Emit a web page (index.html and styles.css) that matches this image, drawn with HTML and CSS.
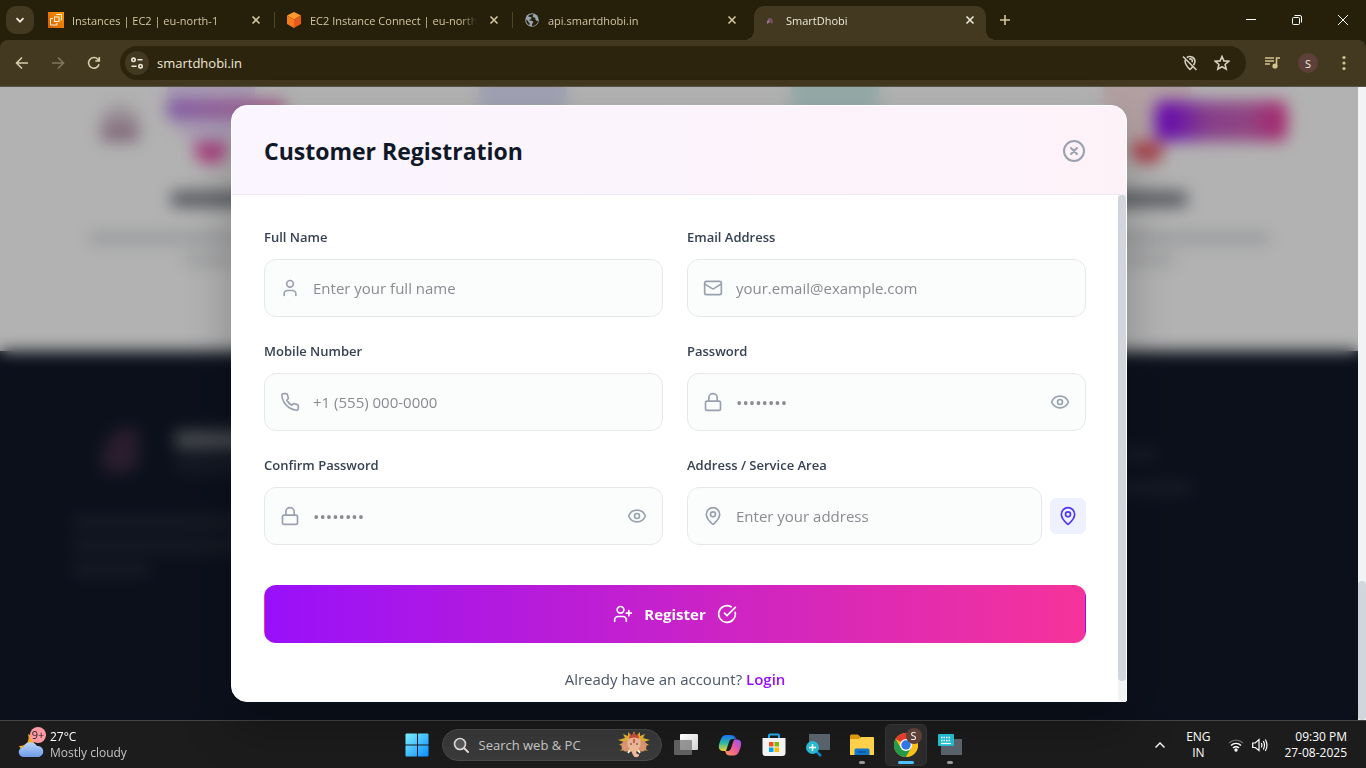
FILE: index.html
```html
<!DOCTYPE html>
<html lang="en">
<head>
<meta charset="utf-8">
<title>SmartDhobi</title>
<link rel="stylesheet" href="styles.css">
</head>
<body>
<div class="tabstrip">
  <button class="tab-search" aria-label="Search tabs"><svg viewBox="0 0 12 12" width="12" height="12"><path d="M2.500 4.200L6 7.700l3.500-3.500" fill="none" stroke="currentColor" stroke-width="1.800"/></svg></button>
  <div class="tabs">
    <div class="tab">
      <svg class="favicon" viewBox="0 0 16 16"><defs><linearGradient id="ec" x1="0" y1="1" x2="1" y2="0"><stop stop-color="#d45b07"/><stop offset="1" stop-color="#ff9900"/></linearGradient></defs><path fill="url(#ec)" d="M0 0h16v16H0z"/><g fill="none" stroke="#fff3df"><rect x="6.500" y="5" width="4.500" height="4.500"/><path d="M5 6.500H2.500v6.500h6.500v-2M8.500 3V2.500h5V8h-1"/></g></svg>
      <span class="tab-title">Instances | EC2 | eu-north-1</span><button class="tab-close" aria-label="Close tab"><svg viewBox="0 0 10 10"><path d="M1.500 1.500l7 7m0-7l-7 7"/></svg></button>
    </div>
    <div class="tab">
      <svg class="favicon" viewBox="0 0 16 16"><path fill="#ff9a2a" d="M8 0l7 3.600L8 7.500 1 3.600z"/><path fill="#f47b20" d="M1 3.600l7 3.900V16l-7-4z"/><path fill="#e8591c" d="M15 3.600L8 7.500V16l7-4z"/></svg>
      <span class="tab-title">EC2 Instance Connect | eu-north</span><button class="tab-close" aria-label="Close tab"><svg viewBox="0 0 10 10"><path d="M1.500 1.500l7 7m0-7l-7 7"/></svg></button>
    </div>
    <div class="tab">
      <svg class="favicon" viewBox="0 0 16 16"><circle cx="8" cy="8" r="6.800" fill="#9aa5b1"/><path fill="#261f0a" d="M9.500 2.500C7 2 5 3 4.200 4.500l3 .8c1 .5.3 1.600-.6 1.700L5 8.500c2 .1 4 .2 4.200 1.700.1 1-1.200 1-1.200 2.200v1.600c3 0 5.800-2.200 6-5-.9.2-1.800-.2-2.300-1C11 7 12 5.500 10.300 5.400 8.800 5.300 8 4.200 9.500 2.500zM2.200 7.300c-.4 2.400.9 5 3.300 6l.2-2.300c-1.500-.6-1.200-1.800-3.500-3.700z"/></svg>
      <span class="tab-title">api.smartdhobi.in</span><button class="tab-close" aria-label="Close tab"><svg viewBox="0 0 10 10"><path d="M1.500 1.500l7 7m0-7l-7 7"/></svg></button>
    </div>
    <div class="tab tab-active">
      <svg class="favicon" viewBox="0 0 16 16"><path d="M5.500 7.500c1-2 4-2 4.800 0 .7 1.200.5 2.500.2 4H9c-.4-1.300 0-2-1-2.200" fill="#745267"/><path d="M5 9l2-1 1 2-3 2z" fill="#a77593"/></svg>
      <span class="tab-title">SmartDhobi</span><button class="tab-close" aria-label="Close tab"><svg viewBox="0 0 10 10"><path d="M1.500 1.500l7 7m0-7l-7 7"/></svg></button>
    </div>
  </div>
  <button class="new-tab" aria-label="New tab"><svg viewBox="0 0 12 12" width="12" height="12"><path d="M6 1v10M1 6h10" stroke="currentColor" stroke-width="1.600"/></svg></button>
  <div class="window-controls">
    <button aria-label="Minimize"><svg viewBox="0 0 12 12"><path d="M1 5.500h10"/></svg></button>
    <button aria-label="Restore"><svg viewBox="0 0 12 12"><rect x="1.500" y="3.500" width="7" height="7" rx="1"/><path d="M3.500 1.500H9a1.500 1.500 0 0 1 1.500 1.500v5.500"/></svg></button>
    <button aria-label="Close"><svg viewBox="0 0 12 12"><path d="M1 1l10 10M11 1L1 11"/></svg></button>
  </div>
</div>

<div class="toolbar">
  <button class="tool" aria-label="Back"><svg viewBox="0 0 16 16"><path d="M14 8H3M8 2.500L2.500 8 8 13.500"/></svg></button>
  <button class="tool tool-dim" aria-label="Forward"><svg viewBox="0 0 16 16"><path d="M2 8h11M8 2.500L13.500 8 8 13.500"/></svg></button>
  <button class="tool" aria-label="Reload"><svg viewBox="0 0 16 16"><path d="M13 9.200A5.300 5.300 0 1 1 11.800 4.300L13 5.500M13.300 2v4H9.300"/></svg></button>
  <div class="omnibox">
    <button class="site-info" aria-label="View site information"><svg viewBox="0 0 16 16"><circle cx="4.500" cy="4.800" r="1.700"/><path d="M8.500 4.800h5M2.500 11.200h5"/><circle cx="11.500" cy="11.200" r="1.700"/></svg></button>
    <input class="address" aria-label="Address" value="smartdhobi.in">
    <button class="tool" aria-label="Location blocked"><svg viewBox="0 0 16 16"><path d="M4.800 2.700A5 5 0 0 1 13 6.200c0 1.300-.6 2.600-1.500 4M3.200 5c-.8 3.500 2 6.800 4.800 9.500.9-.8 1.700-1.600 2.400-2.500M7.200 4.400A1.800 1.800 0 1 1 9.700 7M1 1.500l13.500 13.500"/></svg></button>
    <button class="tool" aria-label="Bookmark this page"><svg viewBox="0 0 16 16"><path d="M8 1.500l1.900 4.400 4.800.4-3.600 3.200 1.100 4.700L8 11.700l-4.200 2.500 1.100-4.700L1.300 6.300l4.800-.4z"/></svg></button>
  </div>
  <button class="tool tool-gold" aria-label="Media controls"><svg viewBox="0 0 16 16"><path d="M1 3h9M1 6h9M1 9h5M12.500 11V3H16"/><circle cx="11" cy="11" r="1.800" fill="currentColor"/></svg></button>
  <button class="avatar" aria-label="Profile">S</button>
  <button class="tool tool-gold" aria-label="Menu"><svg viewBox="0 0 16 16"><g fill="currentColor" stroke="none"><circle cx="8" cy="2.500" r="1.600"/><circle cx="8" cy="8" r="1.600"/><circle cx="8" cy="13.500" r="1.600"/></g></svg></button>
</div>

<main class="viewport">
  <div class="site" aria-hidden="true">
    <section class="steps">
      <div class="step step-purple"><i class="step-icon"></i><i class="step-badge"></i><i class="bar bar-title"></i><i class="bar bar-wide"></i><i class="bar bar-short"></i></div>
      <div class="step step-blue"><i class="step-icon"></i><i class="step-badge"></i><i class="bar bar-title"></i><i class="bar bar-wide"></i><i class="bar bar-short"></i></div>
      <div class="step step-teal"><i class="step-icon"></i><i class="step-badge"></i><i class="bar bar-title"></i><i class="bar bar-wide"></i><i class="bar bar-short"></i></div>
      <div class="step step-red"><i class="step-icon"></i><i class="step-badge"></i><i class="bar bar-title"></i><i class="bar bar-wide"></i><i class="bar bar-short"></i></div>
    </section>
    <footer class="site-footer">
      <div class="footer-brand"><i class="footer-logo"></i><div><i class="bar foot-name"></i><i class="bar foot-tag"></i></div></div>
      <div class="foot-links"><i class="bar"></i><i class="bar foot-long"></i></div>
      <div class="foot-copy"><i class="bar"></i><i class="bar"></i><i class="bar foot-end"></i></div>
    </footer>
    <header class="site-header"><i class="brand-logo"></i><i class="brand-name"></i><i class="header-cta"></i></header>
  </div>

  <div class="overlay">
    <section class="modal" role="dialog" aria-labelledby="dialog-title">
      <header class="modal-header">
        <h2 id="dialog-title">Customer Registration</h2>
        <button class="modal-close" aria-label="Close"><svg class="icon icon-lg" viewBox="0 0 24 24"><circle cx="12" cy="12" r="10"/><path d="M15 9l-6 6M9 9l6 6"/></svg></button>
      </header>
      <div class="modal-body">
        <form class="form">
          <div class="fields">
            <div class="field">
              <label for="name">Full Name</label>
              <div class="control"><svg class="icon" viewBox="0 0 24 24"><path d="M19 21v-2a4 4 0 0 0-4-4H9a4 4 0 0 0-4 4v2"/><circle cx="12" cy="7" r="4"/></svg><input id="name" type="text" placeholder="Enter your full name"></div>
            </div>
            <div class="field">
              <label for="email">Email Address</label>
              <div class="control"><svg class="icon" viewBox="0 0 24 24"><rect x="2" y="4" width="20" height="16" rx="2"/><path d="M22 7l-8.970 5.700a1.940 1.940 0 0 1-2.060 0L2 7"/></svg><input id="email" type="email" placeholder="your.email@example.com"></div>
            </div>
            <div class="field">
              <label for="mobile">Mobile Number</label>
              <div class="control"><svg class="icon" viewBox="0 0 24 24"><path d="M22 16.920v3a2 2 0 0 1-2.180 2 19.790 19.790 0 0 1-8.630-3.070 19.500 19.500 0 0 1-6-6 19.790 19.790 0 0 1-3.070-8.670A2 2 0 0 1 4.110 2h3a2 2 0 0 1 2 1.720 12.840 12.840 0 0 0 .7 2.810 2 2 0 0 1-.45 2.110L8.090 9.910a16 16 0 0 0 6 6l1.270-1.270a2 2 0 0 1 2.110-.45 12.840 12.840 0 0 0 2.810.7A2 2 0 0 1 22 16.920z"/></svg><input id="mobile" type="tel" placeholder="+1 (555) 000-0000"></div>
            </div>
            <div class="field">
              <label for="password">Password</label>
              <div class="control"><svg class="icon" viewBox="0 0 24 24"><rect x="3" y="11" width="18" height="11" rx="2"/><path d="M7 11V7a5 5 0 0 1 10 0v4"/></svg><input id="password" type="password" placeholder="••••••••"><button type="button" class="reveal" aria-label="Show password"><svg class="icon" viewBox="0 0 24 24"><path d="M2.062 12.348a1 1 0 0 1 0-.696 10.750 10.750 0 0 1 19.876 0 1 1 0 0 1 0 .696 10.750 10.750 0 0 1-19.876 0"/><circle cx="12" cy="12" r="3"/></svg></button></div>
            </div>
            <div class="field">
              <label for="confirm">Confirm Password</label>
              <div class="control"><svg class="icon" viewBox="0 0 24 24"><rect x="3" y="11" width="18" height="11" rx="2"/><path d="M7 11V7a5 5 0 0 1 10 0v4"/></svg><input id="confirm" type="password" placeholder="••••••••"><button type="button" class="reveal" aria-label="Show password"><svg class="icon" viewBox="0 0 24 24"><path d="M2.062 12.348a1 1 0 0 1 0-.696 10.750 10.750 0 0 1 19.876 0 1 1 0 0 1 0 .696 10.750 10.750 0 0 1-19.876 0"/><circle cx="12" cy="12" r="3"/></svg></button></div>
            </div>
            <div class="field">
              <label for="address">Address / Service Area</label>
              <div class="address-row">
                <div class="control"><svg class="icon" viewBox="0 0 24 24"><path d="M20 10c0 4.993-5.539 10.193-7.399 11.799a1 1 0 0 1-1.202 0C9.539 20.193 4 14.993 4 10a8 8 0 0 1 16 0"/><circle cx="12" cy="10" r="3"/></svg><input id="address" type="text" placeholder="Enter your address"></div>
                <button type="button" class="locate" aria-label="Use current location"><svg class="icon" viewBox="0 0 24 24"><path d="M20 10c0 4.993-5.539 10.193-7.399 11.799a1 1 0 0 1-1.202 0C9.539 20.193 4 14.993 4 10a8 8 0 0 1 16 0"/><circle cx="12" cy="10" r="3"/></svg></button>
              </div>
            </div>
          </div>
          <button type="submit" class="submit"><svg class="icon" viewBox="0 0 24 24"><path d="M16 21v-2a4 4 0 0 0-4-4H6a4 4 0 0 0-4 4v2M19 8v6M22 11h-6"/><circle cx="9" cy="7" r="4"/></svg>Register<svg class="icon" viewBox="0 0 24 24"><path d="M21.801 10A10 10 0 1 1 17 3.335M9 11l3 3L22 4"/></svg></button>
          <p class="login-line">Already have an account? <a href="#login">Login</a></p>
        </form>
        <div class="modal-scroll"><div class="modal-thumb"></div></div>
      </div>
    </section>
  </div>
  <div class="page-scroll"><div class="page-thumb"></div></div>
</main>

<div class="taskbar">
  <div class="weather">
    <svg viewBox="0 0 28 32" width="28" height="32"><defs><linearGradient id="cl" x1="0" y1="0" x2="0" y2="1"><stop stop-color="#b9d7fb"/><stop offset="1" stop-color="#6f9be8"/></linearGradient></defs><path d="M10 5c2 7-1 12-9 12 2 5 9 6 13 1s2-11-4-13z" fill="#f9a825"/><path d="M6 28a5 5 0 0 1-.5-10 7.500 7.500 0 0 1 13.500-1 5.600 5.600 0 0 1 2 11z" fill="url(#cl)"/></svg>
    <span class="weather-badge">9+</span>
    <div class="weather-text"><span>27°C</span><span class="muted">Mostly cloudy</span></div>
  </div>
  <div class="apps">
    <button class="app" aria-label="Start"><svg viewBox="0 0 24 24"><defs><linearGradient id="wn" x1="0" y1="0" x2="1" y2="1"><stop stop-color="#7df0ff"/><stop offset="1" stop-color="#0a8dff"/></linearGradient></defs><path fill="url(#wn)" d="M1.500.5H12v11H.5V1.500a1 1 0 0 1 1-1zM13 .5h9.500a1 1 0 0 1 1 1v10H13zM.5 12.500H12v11H1.500a1 1 0 0 1-1-1zM13 12.500h10.500v10a1 1 0 0 1-1 1H13z"/></svg></button>
    <label class="search"><svg viewBox="0 0 16 16"><circle cx="7" cy="7" r="5.500" fill="#5b5b5b" stroke="#e8e8e8" stroke-width="1.600"/><path d="M11 11l4 4" stroke="#e8e8e8" stroke-width="1.800" stroke-linecap="round"/></svg><input aria-label="Search" placeholder="Search web &amp; PC">
      <svg class="festive" viewBox="0 0 32 28"><path fill="#efbb35" d="M16 0l2 5 4-4v4l5-2-2 4 7 2-6 2 5 3-6 1 5 5-7-2-1 4-4-2-2 5-2-5-4 2-1-4-7 2 5-5-6-1 5-3-6-2 7-2-2-4 5 2V1l4 4z"/><path fill="#d8493f" d="M11 8l1-5 2 2 2-4 2 4 2-2 1 5z"/><ellipse cx="8" cy="15" rx="4.500" ry="5.500" fill="#e79b77"/><ellipse cx="24" cy="15" rx="4.500" ry="5.500" fill="#e79b77"/><path fill="#f6c0a0" d="M10 8q6-3 12 0 2 6-2 10l-2 3q1 3 3 2v2q-4 3-6-1-1-3-3-6-4-4-2-10z"/><path d="M12 19l-2 3M20 19l2 3" stroke="#fff" stroke-width="1.500"/><circle cx="13" cy="13" r=".8" fill="#5c2c24"/><circle cx="19" cy="13" r=".8" fill="#5c2c24"/><path d="M16 8v4" stroke="#d8312c" stroke-width="1.300"/></svg></label>
    <button class="app" aria-label="Task view"><svg viewBox="0 0 24 24"><defs><linearGradient id="tv" x1="0" y1="0" x2="1" y2="1"><stop stop-color="#fff"/><stop offset="1" stop-color="#d2d2d2"/></linearGradient></defs><rect x="6" y="1" width="18" height="16" rx="1" fill="url(#tv)"/><rect x="0" y="7" width="18" height="15" rx="1" fill="#777" fill-opacity=".75"/></svg></button>
    <button class="app" aria-label="Copilot"><svg viewBox="0 0 24 24"><defs><linearGradient id="ca" x1="0" y1="0" x2="0" y2="1"><stop stop-color="#1f6ff0"/><stop offset=".5" stop-color="#2bb8a5"/><stop offset="1" stop-color="#f4d32c"/></linearGradient><linearGradient id="cb" x1="1" y1="0" x2="0" y2="1"><stop stop-color="#9250f0"/><stop offset=".5" stop-color="#ee5a9b"/><stop offset="1" stop-color="#ff9a4c"/></linearGradient></defs><path fill="url(#ca)" d="M17 6c-1-3-2-4-5-4H8C4 2 3 6 1.500 10 0 14 1 18 5 18h3l3-9c.8-2.500 2-3 4-3z"/><path fill="url(#cb)" d="M7 18c1 3 2 4.500 5 4.500h4c4 0 5-4 6.500-8C24 10 23 6.500 19 6.500h-3l-3 9c-.8 2-2 2.500-4 2.500z"/><path fill="#2354d8" d="M12 2c3 0 4 1 5 4.500h2L17 3.500Q16 2 14 2z"/></svg></button>
    <button class="app" aria-label="Microsoft Store"><svg viewBox="0 0 24 24"><path d="M7 6V2.500a1 1 0 0 1 1-1h8a1 1 0 0 1 1 1V6" fill="none" stroke="#20a5e8" stroke-width="2"/><path fill="#f3f3f3" d="M.5 5h23v15a3 3 0 0 1-3 3h-17a3 3 0 0 1-3-3z"/><path fill="#f25022" d="M7 9h4.500v4.500H7z"/><path fill="#7fba00" d="M12.500 9H17v4.500h-4.500z"/><path fill="#00a4ef" d="M7 14.500h4.500V19H7z"/><path fill="#ffb900" d="M12.500 14.500H17V19h-4.500z"/></svg></button>
    <button class="app" aria-label="Magnifier"><svg viewBox="0 0 24 24"><path fill="#59616b" d="M3 1h21v16H3z"/><path d="M10 18l5 5" stroke="#1685c4" stroke-width="2.500"/><circle cx="6.500" cy="14.500" r="6.500" fill="#27b9d2"/><path d="M6.500 11v7M3 14.500h7" stroke="#fff" stroke-width="1.500"/></svg></button>
    <button class="app app-open" aria-label="File Explorer"><svg viewBox="0 0 24 24"><path fill="#dc9a0c" d="M0 3a1.500 1.500 0 0 1 1.500-1.500H8L10.500 4v4H0z"/><path fill="#ffd04a" d="M0 6h9l2-2h12a1 1 0 0 1 1 1v17H0z"/><path fill="#1277ca" d="M4.500 22v-5a1.500 1.500 0 0 1 1.500-1.500h12a1.500 1.500 0 0 1 1.500 1.500v5z"/><path d="M8 19h8" stroke="#0b559b" stroke-width="1.500"/></svg></button>
    <button class="app app-open app-current" aria-label="Google Chrome"><svg viewBox="0 0 24 24"><circle cx="12" cy="12" r="12" fill="#fbc116"/><path fill="#e33b2e" d="M12 12L1.600 6a12 12 0 0 1 20.800 0z"/><path fill="#229a49" d="M12 24A12 12 0 0 1 1.600 6l5.200 9L12 18l5.200-3z"/><path fill="#fbc116" d="M22.400 6A12 12 0 0 1 12 24l5.200-9L12 6z"/><circle cx="12" cy="12" r="6" fill="#fff"/><circle cx="12" cy="12" r="4.700" fill="#3078e8"/></svg><span class="chrome-badge">S</span></button>
    <button class="app app-open" aria-label="On-screen keyboard"><svg viewBox="0 0 24 24"><path fill="#59616b" d="M3 6h21v16H3z"/><rect y="1" width="16" height="12" rx="1" fill="#22b9cd"/><path d="M3 4.500h10M3 7.500h10" stroke="#fff" stroke-width="1.500" stroke-dasharray="1.500 1"/><path d="M3 10.500h10" stroke="#fff" stroke-width="1.300"/></svg></button>
  </div>
  <div class="tray">
    <button class="tray-btn" aria-label="Hidden icons"><svg viewBox="0 0 12 12" width="12" height="12"><path d="M1.500 8.500L6 4l4.500 4.500" fill="none" stroke="#fff" stroke-width="1.400"/></svg></button>
    <div class="lang"><span>ENG</span><span>IN</span></div>
    <div class="status">
      <svg viewBox="0 0 16 16" fill="none" stroke="#fff" stroke-width="1.400"><path d="M1 6a10 10 0 0 1 14 0" stroke="#666"/><path d="M3 8.500a7 7 0 0 1 10 0M5 11a4.200 4.200 0 0 1 6 0"/><circle cx="8" cy="13" r="1" fill="#fff"/></svg>
      <svg viewBox="0 0 16 16" fill="none" stroke="#fff" stroke-width="1.200"><path d="M.7 6v4.500h2.500L7 13.500V2.500L3.200 6zM9.300 6q1.200 2 0 4.500M11.300 4q2.400 4 0 8.500M13.300 2.500q3.400 5.500 0 11.500"/></svg>
    </div>
    <div class="clock"><span>09:30 PM</span><span>27-08-2025</span></div>
  </div>
</div>
</body>
</html>
```
FILE: styles.css
```css
* { box-sizing: border-box; }
body {
  margin: 0;
  height: 100vh;
  display: flex;
  flex-direction: column;
  overflow: hidden;
  font-family: "Open Sans", "Noto Sans", sans-serif;
  background: #261f0a;
}
button { border: 0; padding: 0; background: none; color: inherit; font: inherit; display: grid; place-items: center; }
input { border: 0; padding: 0; background: none; font: inherit; outline: 0; min-width: 0; }
i { display: block; }

/* Tab strip */
.tabstrip { height: 40px; display: flex; align-items: center; color: #d3c6a0; }
.tab-search { width: 28px; height: 28px; margin: 0 3px 0 6px; border-radius: 10px; background: #423920; color: #eee8d8; }
.tabs { display: flex; align-self: stretch; padding-top: 6px; flex: 0 1 952px; min-width: 0; }
.tab { flex: 0 1 238px; min-width: 0; display: flex; align-items: center; padding: 0 11px 6px 11px; position: relative; font-size: 11px; }
.tab:nth-child(-n+2)::after { content: ""; position: absolute; right: 0; top: 6px; width: 1px; height: 16px; background: #4d442a; }
.tab-active { flex-basis: 232px; margin: 0 3px; padding: 0 8px 6px 8px; background: #423920; border-radius: 10px 10px 0 0; color: #eee8d8; }
.tab-active::before, .tab-active::after { content: ""; position: absolute; bottom: 0; width: 10px; height: 10px; }
.tab-active::before { right: 100%; background: radial-gradient(circle at 0 0, #261f0a 10px, #423920 10px); }
.tab-active::after { left: 100%; background: radial-gradient(circle at 100% 0, #261f0a 10px, #423920 10px); }
.favicon { width: 16px; height: 16px; flex: none; margin-right: 8px; }
.tab-title { flex: 1; min-width: 0; overflow: hidden; white-space: nowrap; mask-image: linear-gradient(90deg, #000 90%, transparent); }
.tab-close { width: 16px; height: 16px; margin-left: 9px; flex: none; }
.tab-close svg { width: 10px; height: 10px; stroke: currentColor; stroke-width: 1.6; }
.new-tab { width: 28px; height: 28px; margin-left: 2px; }
.window-controls { display: flex; margin-left: auto; color: #fff; }
.window-controls button { width: 46px; height: 40px; }
.window-controls svg { width: 12px; height: 12px; fill: none; stroke: #fff; }

/* Toolbar */
.toolbar { height: 47px; flex: none; display: flex; align-items: center; padding: 0 8px; gap: 8px; background: #423920; border-radius: 8px 8px 0 0; border-bottom: 1px solid #5a5445; color: #d8cdac; }
.tool { width: 28px; height: 28px; flex: none; }
.tool svg, .site-info svg { width: 16px; height: 16px; fill: none; stroke: currentColor; stroke-width: 1.6; }
.tool-dim { color: #81775c; }
.omnibox { flex: 1; height: 34px; margin: 0 4px; display: flex; align-items: center; gap: 4px; padding: 0 10px 0 5px; border-radius: 17px; background: #2d240e; color: #d6cfbf; }
.site-info { width: 24px; height: 24px; border-radius: 12px; background: #423920; color: #eee8d8; }
.address { flex: 1; margin-left: 4px; color: #eee8d8; font-size: 13px; }
.tool-gold { color: #d3c490; }
.avatar { width: 20px; height: 20px; margin: 0 4px; border-radius: 10px; background: #5d4038; color: #f4ece8; font-size: 11px; }

/* Page behind the dialog */
.viewport { flex: 1; min-height: 0; position: relative; display: grid; grid-template-columns: 1fr 8px; background: #fff; }
.site { position: relative; isolation: isolate; overflow: hidden; display: flex; flex-direction: column; background: #fff; }
.steps { height: 264px; display: grid; grid-template-columns: repeat(4, 1fr); gap: 32px; padding: 0 71px; }
.step { display: flex; flex-direction: column; align-items: center; --tone: #a855f7; }
.step-blue { --tone: #7c83ff; }
.step-teal { --tone: #2bc5ad; }
.step-red { --tone: #f8788c; }
.step-icon { width: 88px; height: 56px; border-radius: 0 0 40px 40px; background: var(--tone); }
.step-badge { width: 34px; height: 20px; margin-bottom: -4px; border-radius: 4px 4px 16px 16px; background: #f04fae; position: relative; z-index: 2; }
.step-blue .step-badge, .step-teal .step-badge { background: var(--tone); }
.step-red .step-badge { background: #ef5360; }
.bar { height: 10px; border-radius: 4px; background: #aeb2b8; }
.bar-title { width: 80px; height: 16px; margin: 32px 0 26px; background: #7c8188; }
.bar-wide { width: 244px; background: #d4d7da; }
.bar-short { width: 56px; margin-top: 12px; background: #dcdee0; }
.site-footer { flex: 1; background: #101828; padding: 76px 71px; display: grid; grid-template-columns: 1fr 230px; align-content: start; row-gap: 24px; }
.site-footer .bar { background: #252c39; }
.footer-brand { display: flex; gap: 36px; padding-left: 30px; }
.footer-logo { width: 38px; height: 46px; border-radius: 90% 20% 40% 30%; background: #3d2a43; }
.site-footer .foot-name { width: 120px; height: 18px; margin: 4px 0 12px; background: #696c74; }
.foot-tag { width: 120px; }
.foot-links { display: grid; gap: 24px; align-content: start; padding-top: 22px; }
.foot-links .bar { width: 100px; }
.foot-links .foot-long { width: 136px; }
.foot-copy { display: grid; gap: 14px; width: 280px; }
.foot-copy .foot-end { width: 80px; }
.site-header { position: absolute; inset: 0 0 auto 0; height: 68px; display: flex; align-items: center; padding: 0 71px; background: rgba(255, 255, 255, .8); }
.brand-logo { width: 38px; height: 36px; margin: 4px 0 0 30px; border-radius: 18px 18px 4px 4px; background: linear-gradient(#dccfd9 30%, #ab829e); }
.brand-name { width: 118px; height: 18px; margin: 0 auto 24px 28px; background: linear-gradient(90deg, #b47be8, #e883bd); }
.header-cta { width: 132px; height: 40px; border-radius: 8px; background: linear-gradient(90deg, #9414f5 10%, #c05bc6 40%, #cf63bb 70%, #f22f98); }
.page-scroll { background: #f1f3f5; display: flex; flex-direction: column; justify-content: flex-end; }
.page-thumb { height: 22%; border-radius: 4px; background: #d1d5dc; }

/* Dialog */
.overlay { position: absolute; inset: 0 8px 0 0; display: flex; justify-content: center; padding: 18px 16px; background: rgba(0, 0, 0, .3); backdrop-filter: blur(8px); }
.modal { width: 100%; max-width: 896px; display: flex; flex-direction: column; overflow: hidden; border: 1px solid #fff; border-radius: 16px 16px 2px 16px; background: #fff; box-shadow: 0 25px 50px rgba(0, 0, 0, .25); }
.modal-header { display: flex; align-items: center; justify-content: space-between; padding: 29px 40px 27px 32px; border-bottom: 1px solid #f0e8f2; background: linear-gradient(90deg, #faf5ff, #fdf2f8); }
.modal-header h2 { margin: 0; font-size: 23px; line-height: 32px; color: #101828; }
.modal-close { color: #99a1af; }
.modal-body { flex: 1; min-height: 0; display: grid; grid-template-columns: 1fr 8px; overflow: hidden; }
.form { padding: 32px 32px 0; min-width: 0; }
.fields { display: grid; grid-template-columns: 1fr 1fr; gap: 24px; margin-bottom: 40px; }
.field { display: flex; flex-direction: column; gap: 12px; }
.field label { font-size: 13px; line-height: 20px; font-weight: 600; color: #364153; }
.control { min-width: 0; height: 58px; display: flex; align-items: center; gap: 13px; padding: 0 15px; border: 1px solid #e5e7eb; border-radius: 12px; background: #fbfdfc; color: #99a1af; }
.control input { flex: 1; height: 100%; font-size: 15px; color: #101828; }
.control input[type="password"] { font-size: 17px; }
.control input::placeholder { color: #8a8b91; opacity: 1; }
.icon { width: 20px; height: 20px; flex: none; fill: none; stroke: currentColor; stroke-width: 2; stroke-linecap: round; stroke-linejoin: round; }
.icon-lg { width: 24px; height: 24px; }
.address-row { display: flex; align-items: center; gap: 8px; }
.address-row .control { flex: 1; }
.locate { width: 36px; height: 36px; border-radius: 6px; background: #eef2ff; color: #4f39f6; }
.submit { width: 100%; height: 58px; display: flex; align-items: center; justify-content: center; gap: 11px; border: 1px solid transparent; border-radius: 12px; background: linear-gradient(90deg, #9810fa, #f6339a); color: #fff; font-size: 15px; font-weight: 700; }
.login-line { margin: 24px 0 0; text-align: center; font-size: 15px; line-height: 24px; color: #4a5565; }
.login-line a { color: #9810fa; font-weight: 600; text-decoration: none; }
.modal-scroll { background: #f1f3f5; }
.modal-thumb { height: 96%; border-radius: 4px; background: #d1d5dc; }

/* Taskbar */
.taskbar { height: 48px; flex: none; display: grid; grid-template-columns: 1fr auto 1fr; align-items: center; border-top: 1px solid #444; background: #1c1c1c; color: #fff; font-size: 12px; line-height: 16px; }
.weather { display: flex; align-items: center; gap: 4px; padding-left: 18px; position: relative; }
.weather-badge { position: absolute; left: 30px; top: -2px; width: 16px; height: 16px; border-radius: 8px; background: #ff99a4; color: #1c1c1c; font-size: 11px; text-align: center; }
.weather-text, .lang, .clock { display: flex; flex-direction: column; }
.muted { color: #c5c5c5; }
.apps { display: flex; align-items: center; }
.app { width: 44px; height: 47px; position: relative; }
.app svg { width: 24px; height: 24px; }
.app-open::after { content: ""; position: absolute; bottom: 4px; width: 6px; height: 3px; border-radius: 2px; background: #999; }
.app-current { width: 40px; height: 40px; margin: 0 2px; border-radius: 4px; background: #2b2b2b; outline: 1px solid #343434; }
.app-current::after { bottom: 1px; width: 16px; background: #4cc2ff; }
.chrome-badge { position: absolute; right: 4px; top: 3px; width: 16px; height: 16px; border-radius: 8px; background: #5d4038; font-size: 11px; }
.search { width: 220px; height: 32px; margin: 0 2px 0 3px; display: flex; align-items: center; gap: 10px; padding: 0 11px 0 10px; border: 1px solid #4c4c4c; border-radius: 16px; background: #3b3b3b; }
.search svg { width: 16px; height: 16px; flex: none; }
.search .festive { width: 32px; height: 28px; }
.search input { flex: 1; font-size: 13px; color: #fff; }
.search input::placeholder { color: #d0d0d0; opacity: 1; }
.tray { display: flex; align-items: center; justify-content: flex-end; padding-right: 19px; }
.tray-btn { width: 24px; height: 32px; }
.lang { width: 52px; text-align: center; }
.status { display: flex; gap: 8px; padding: 0 16px 0 4px; }
.status svg { width: 16px; height: 16px; }
.clock { text-align: right; }
```
